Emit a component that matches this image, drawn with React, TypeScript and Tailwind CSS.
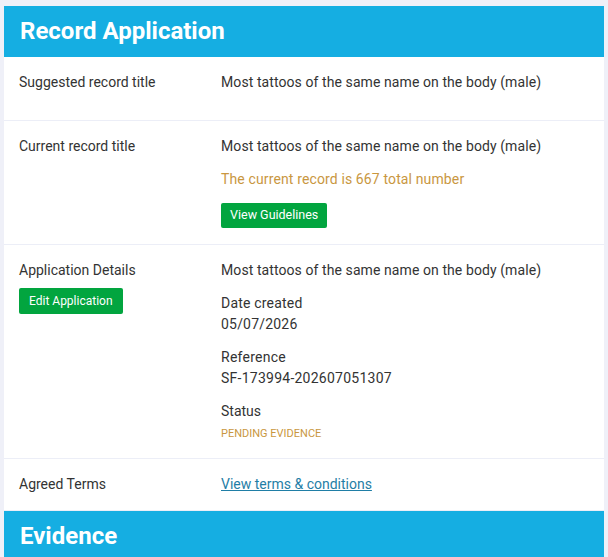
import React from "react";

const font = { fontFamily: "Roboto, 'Noto Sans', sans-serif" };

function Row({ label, children, className = "" }: { label: React.ReactNode; children: React.ReactNode; className?: string }) {
  return (
    <div className={`flex border-b border-[#eceef7] pl-[15px] pr-[15px] ${className}`}>
      <div className="w-[202px] shrink-0">{label}</div>
      <div className="flex-1">{children}</div>
    </div>
  );
}

export default function App() {
  return (
    <div className="min-h-[557px] bg-[#eff0f8] pt-[6px] px-[4px] text-[14px] leading-[21px] text-[#333]" style={font}>
      <div className="bg-white">
        <div className="h-[51px] bg-[#15aee2] px-[16px] flex items-center">
          <h1 className="text-white text-[24px] font-bold leading-none -mt-[1px]">Record Application</h1>
        </div>

        <Row label="Suggested record title" className="pt-[15px] pb-[27px]">
          <p className="tracking-[0.085px]">Most tattoos of the same name on the body (male)</p>
        </Row>

        <Row label="Current record title" className="pt-[15px] pb-[16px]">
          <p className="tracking-[0.085px]">Most tattoos of the same name on the body (male)</p>
          <p className="mt-[12px] text-[#c9973f] tracking-[0.13px]">The current record is 667 total number</p>
          <button className="mt-[13px] h-[25px] px-[9px] rounded-[2px] bg-[#02a53f] text-white text-[12.5px] leading-none">
            View Guidelines
          </button>
        </Row>

        <Row
          className="pt-[15px] pb-[17px]"
          label={
            <div>
              <div>Application Details</div>
              <button className="mt-[7px] h-[26px] px-[10px] rounded-[2px] bg-[#02a53f] text-white text-[12px] leading-none">
                Edit Application
              </button>
            </div>
          }
        >
          <p className="tracking-[0.085px]">Most tattoos of the same name on the body (male)</p>
          <div className="mt-[12px] tracking-[0.2px]">
            <div>Date created</div>
            <div>05/07/2026</div>
          </div>
          <div className="mt-[12px] tracking-[0.25px]">
            <div>Reference</div>
            <div>SF-173994-202607051307</div>
          </div>
          <div className="mt-[12px]">
            <div>Status</div>
            <div className="mt-[4px] text-[11px] leading-[15px] text-[#c9973f] uppercase">Pending evidence</div>
          </div>
        </Row>

        <Row label="Agreed Terms" className="pt-[15px] pb-[15px]">
          <a href="#" className="text-[#1f7ea6] underline">View terms &amp; conditions</a>
        </Row>

        <div className="h-[51px] bg-[#15aee2] px-[16px] flex items-center">
          <h2 className="text-white text-[24px] font-bold leading-none -mt-[2px]">Evidence</h2>
        </div>
      </div>
    </div>
  );
}
